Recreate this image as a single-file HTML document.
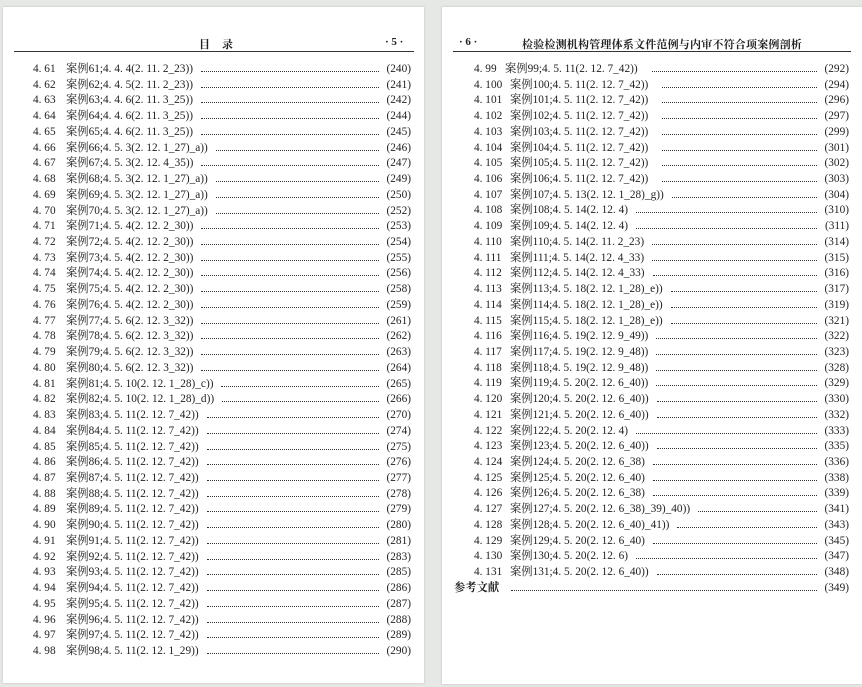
<!DOCTYPE html>
<html><head><meta charset="utf-8"><style>
body{margin:0;width:862px;height:687px;background:#e6e8e6;position:relative;overflow:hidden;font-family:"Liberation Serif","Noto Serif CJK SC",serif;color:#222;}
.pg{position:absolute;background:#fff;box-shadow:0 0 2px #bbb;}
.hl{position:absolute;border-top:1px solid #333;height:0;}
.h{position:absolute;font-size:11px;font-weight:bold;white-space:nowrap;}
.r{position:absolute;height:15px;line-height:15px;font-size:11.3px;display:flex;white-space:nowrap;}
.n{width:33px;flex:none;}
.t{flex:none;}
.d{flex:1;margin:0 8px 0 8px;border-bottom:1.5px dotted #333;height:9px;}
.p{flex:none;}
</style></head><body>
<div class="pg" style="left:3px;top:7px;width:421px;height:676px">
<div class="h" style="left:196px;top:29px;letter-spacing:12px">目录</div>
<div class="h" style="left:382px;top:29px">· 5 ·</div>
<div class="hl" style="left:11px;top:44px;width:400px"></div>
<div style="position:absolute;left:30px;top:55px;width:378px">
<div class="r" style="top:0;width:100%"><span class="n">4. 61</span><span class="t">案例61;4. 4. 4(2. 11. 2_23))</span><span class="d"></span><span class="p">(240)</span></div>
<div class="r" style="top:15.73px;width:100%"><span class="n">4. 62</span><span class="t">案例62;4. 4. 5(2. 11. 2_23))</span><span class="d"></span><span class="p">(241)</span></div>
<div class="r" style="top:31.46px;width:100%"><span class="n">4. 63</span><span class="t">案例63;4. 4. 6(2. 11. 3_25))</span><span class="d"></span><span class="p">(242)</span></div>
<div class="r" style="top:47.19px;width:100%"><span class="n">4. 64</span><span class="t">案例64;4. 4. 6(2. 11. 3_25))</span><span class="d"></span><span class="p">(244)</span></div>
<div class="r" style="top:62.92px;width:100%"><span class="n">4. 65</span><span class="t">案例65;4. 4. 6(2. 11. 3_25))</span><span class="d"></span><span class="p">(245)</span></div>
<div class="r" style="top:78.65px;width:100%"><span class="n">4. 66</span><span class="t">案例66;4. 5. 3(2. 12. 1_27)_a))</span><span class="d"></span><span class="p">(246)</span></div>
<div class="r" style="top:94.38px;width:100%"><span class="n">4. 67</span><span class="t">案例67;4. 5. 3(2. 12. 4_35))</span><span class="d"></span><span class="p">(247)</span></div>
<div class="r" style="top:110.11px;width:100%"><span class="n">4. 68</span><span class="t">案例68;4. 5. 3(2. 12. 1_27)_a))</span><span class="d"></span><span class="p">(249)</span></div>
<div class="r" style="top:125.84px;width:100%"><span class="n">4. 69</span><span class="t">案例69;4. 5. 3(2. 12. 1_27)_a))</span><span class="d"></span><span class="p">(250)</span></div>
<div class="r" style="top:141.57px;width:100%"><span class="n">4. 70</span><span class="t">案例70;4. 5. 3(2. 12. 1_27)_a))</span><span class="d"></span><span class="p">(252)</span></div>
<div class="r" style="top:157.3px;width:100%"><span class="n">4. 71</span><span class="t">案例71;4. 5. 4(2. 12. 2_30))</span><span class="d"></span><span class="p">(253)</span></div>
<div class="r" style="top:173.03px;width:100%"><span class="n">4. 72</span><span class="t">案例72;4. 5. 4(2. 12. 2_30))</span><span class="d"></span><span class="p">(254)</span></div>
<div class="r" style="top:188.76px;width:100%"><span class="n">4. 73</span><span class="t">案例73;4. 5. 4(2. 12. 2_30))</span><span class="d"></span><span class="p">(255)</span></div>
<div class="r" style="top:204.49px;width:100%"><span class="n">4. 74</span><span class="t">案例74;4. 5. 4(2. 12. 2_30))</span><span class="d"></span><span class="p">(256)</span></div>
<div class="r" style="top:220.22px;width:100%"><span class="n">4. 75</span><span class="t">案例75;4. 5. 4(2. 12. 2_30))</span><span class="d"></span><span class="p">(258)</span></div>
<div class="r" style="top:235.95px;width:100%"><span class="n">4. 76</span><span class="t">案例76;4. 5. 4(2. 12. 2_30))</span><span class="d"></span><span class="p">(259)</span></div>
<div class="r" style="top:251.68px;width:100%"><span class="n">4. 77</span><span class="t">案例77;4. 5. 6(2. 12. 3_32))</span><span class="d"></span><span class="p">(261)</span></div>
<div class="r" style="top:267.41px;width:100%"><span class="n">4. 78</span><span class="t">案例78;4. 5. 6(2. 12. 3_32))</span><span class="d"></span><span class="p">(262)</span></div>
<div class="r" style="top:283.14px;width:100%"><span class="n">4. 79</span><span class="t">案例79;4. 5. 6(2. 12. 3_32))</span><span class="d"></span><span class="p">(263)</span></div>
<div class="r" style="top:298.87px;width:100%"><span class="n">4. 80</span><span class="t">案例80;4. 5. 6(2. 12. 3_32))</span><span class="d"></span><span class="p">(264)</span></div>
<div class="r" style="top:314.6px;width:100%"><span class="n">4. 81</span><span class="t">案例81;4. 5. 10(2. 12. 1_28)_c))</span><span class="d"></span><span class="p">(265)</span></div>
<div class="r" style="top:330.33px;width:100%"><span class="n">4. 82</span><span class="t">案例82;4. 5. 10(2. 12. 1_28)_d))</span><span class="d"></span><span class="p">(266)</span></div>
<div class="r" style="top:346.06px;width:100%"><span class="n">4. 83</span><span class="t">案例83;4. 5. 11(2. 12. 7_42))</span><span class="d"></span><span class="p">(270)</span></div>
<div class="r" style="top:361.79px;width:100%"><span class="n">4. 84</span><span class="t">案例84;4. 5. 11(2. 12. 7_42))</span><span class="d"></span><span class="p">(274)</span></div>
<div class="r" style="top:377.52px;width:100%"><span class="n">4. 85</span><span class="t">案例85;4. 5. 11(2. 12. 7_42))</span><span class="d"></span><span class="p">(275)</span></div>
<div class="r" style="top:393.25px;width:100%"><span class="n">4. 86</span><span class="t">案例86;4. 5. 11(2. 12. 7_42))</span><span class="d"></span><span class="p">(276)</span></div>
<div class="r" style="top:408.98px;width:100%"><span class="n">4. 87</span><span class="t">案例87;4. 5. 11(2. 12. 7_42))</span><span class="d"></span><span class="p">(277)</span></div>
<div class="r" style="top:424.71px;width:100%"><span class="n">4. 88</span><span class="t">案例88;4. 5. 11(2. 12. 7_42))</span><span class="d"></span><span class="p">(278)</span></div>
<div class="r" style="top:440.44px;width:100%"><span class="n">4. 89</span><span class="t">案例89;4. 5. 11(2. 12. 7_42))</span><span class="d"></span><span class="p">(279)</span></div>
<div class="r" style="top:456.17px;width:100%"><span class="n">4. 90</span><span class="t">案例90;4. 5. 11(2. 12. 7_42))</span><span class="d"></span><span class="p">(280)</span></div>
<div class="r" style="top:471.9px;width:100%"><span class="n">4. 91</span><span class="t">案例91;4. 5. 11(2. 12. 7_42))</span><span class="d"></span><span class="p">(281)</span></div>
<div class="r" style="top:487.63px;width:100%"><span class="n">4. 92</span><span class="t">案例92;4. 5. 11(2. 12. 7_42))</span><span class="d"></span><span class="p">(283)</span></div>
<div class="r" style="top:503.36px;width:100%"><span class="n">4. 93</span><span class="t">案例93;4. 5. 11(2. 12. 7_42))</span><span class="d"></span><span class="p">(285)</span></div>
<div class="r" style="top:519.09px;width:100%"><span class="n">4. 94</span><span class="t">案例94;4. 5. 11(2. 12. 7_42))</span><span class="d"></span><span class="p">(286)</span></div>
<div class="r" style="top:534.82px;width:100%"><span class="n">4. 95</span><span class="t">案例95;4. 5. 11(2. 12. 7_42))</span><span class="d"></span><span class="p">(287)</span></div>
<div class="r" style="top:550.55px;width:100%"><span class="n">4. 96</span><span class="t">案例96;4. 5. 11(2. 12. 7_42))</span><span class="d"></span><span class="p">(288)</span></div>
<div class="r" style="top:566.28px;width:100%"><span class="n">4. 97</span><span class="t">案例97;4. 5. 11(2. 12. 7_42))</span><span class="d"></span><span class="p">(289)</span></div>
<div class="r" style="top:582.01px;width:100%"><span class="n">4. 98</span><span class="t">案例98;4. 5. 11(2. 12. 1_29))</span><span class="d"></span><span class="p">(290)</span></div>
</div>
</div>
<div class="pg" style="left:442px;top:7px;width:420px;height:677px">
<div class="h" style="left:17px;top:29px">· 6 ·</div>
<div class="h" style="left:80px;top:29px;letter-spacing:0.2px">检验检测机构管理体系文件范例与内审不符合项案例剖析</div>
<div class="hl" style="left:11px;top:44px;width:398px"></div>
<div style="position:absolute;left:32px;top:55px;width:375px">
<div class="r" style="top:0;width:100%"><span class="n" style="width:31px">4. 99</span><span class="t">案例99;4. 5. 11(2. 12. 7_42))</span><span class="d" style="margin-left:14px"></span><span class="p">(292)</span></div>
<div class="r" style="top:15.72px;width:100%"><span class="n" style="width:36px">4. 100</span><span class="t">案例100;4. 5. 11(2. 12. 7_42))</span><span class="d" style="margin-left:14px"></span><span class="p">(294)</span></div>
<div class="r" style="top:31.44px;width:100%"><span class="n" style="width:36px">4. 101</span><span class="t">案例101;4. 5. 11(2. 12. 7_42))</span><span class="d" style="margin-left:14px"></span><span class="p">(296)</span></div>
<div class="r" style="top:47.16px;width:100%"><span class="n" style="width:36px">4. 102</span><span class="t">案例102;4. 5. 11(2. 12. 7_42))</span><span class="d" style="margin-left:14px"></span><span class="p">(297)</span></div>
<div class="r" style="top:62.88px;width:100%"><span class="n" style="width:36px">4. 103</span><span class="t">案例103;4. 5. 11(2. 12. 7_42))</span><span class="d" style="margin-left:14px"></span><span class="p">(299)</span></div>
<div class="r" style="top:78.6px;width:100%"><span class="n" style="width:36px">4. 104</span><span class="t">案例104;4. 5. 11(2. 12. 7_42))</span><span class="d" style="margin-left:14px"></span><span class="p">(301)</span></div>
<div class="r" style="top:94.32px;width:100%"><span class="n" style="width:36px">4. 105</span><span class="t">案例105;4. 5. 11(2. 12. 7_42))</span><span class="d" style="margin-left:14px"></span><span class="p">(302)</span></div>
<div class="r" style="top:110.04px;width:100%"><span class="n" style="width:36px">4. 106</span><span class="t">案例106;4. 5. 11(2. 12. 7_42))</span><span class="d" style="margin-left:14px"></span><span class="p">(303)</span></div>
<div class="r" style="top:125.76px;width:100%"><span class="n" style="width:36px">4. 107</span><span class="t">案例107;4. 5. 13(2. 12. 1_28)_g))</span><span class="d"></span><span class="p">(304)</span></div>
<div class="r" style="top:141.48px;width:100%"><span class="n" style="width:36px">4. 108</span><span class="t">案例108;4. 5. 14(2. 12. 4)</span><span class="d"></span><span class="p">(310)</span></div>
<div class="r" style="top:157.2px;width:100%"><span class="n" style="width:36px">4. 109</span><span class="t">案例109;4. 5. 14(2. 12. 4)</span><span class="d"></span><span class="p">(311)</span></div>
<div class="r" style="top:172.92px;width:100%"><span class="n" style="width:36px">4. 110</span><span class="t">案例110;4. 5. 14(2. 11. 2_23)</span><span class="d"></span><span class="p">(314)</span></div>
<div class="r" style="top:188.64px;width:100%"><span class="n" style="width:36px">4. 111</span><span class="t">案例111;4. 5. 14(2. 12. 4_33)</span><span class="d"></span><span class="p">(315)</span></div>
<div class="r" style="top:204.36px;width:100%"><span class="n" style="width:36px">4. 112</span><span class="t">案例112;4. 5. 14(2. 12. 4_33)</span><span class="d"></span><span class="p">(316)</span></div>
<div class="r" style="top:220.08px;width:100%"><span class="n" style="width:36px">4. 113</span><span class="t">案例113;4. 5. 18(2. 12. 1_28)_e))</span><span class="d"></span><span class="p">(317)</span></div>
<div class="r" style="top:235.8px;width:100%"><span class="n" style="width:36px">4. 114</span><span class="t">案例114;4. 5. 18(2. 12. 1_28)_e))</span><span class="d"></span><span class="p">(319)</span></div>
<div class="r" style="top:251.52px;width:100%"><span class="n" style="width:36px">4. 115</span><span class="t">案例115;4. 5. 18(2. 12. 1_28)_e))</span><span class="d"></span><span class="p">(321)</span></div>
<div class="r" style="top:267.24px;width:100%"><span class="n" style="width:36px">4. 116</span><span class="t">案例116;4. 5. 19(2. 12. 9_49))</span><span class="d"></span><span class="p">(322)</span></div>
<div class="r" style="top:282.96px;width:100%"><span class="n" style="width:36px">4. 117</span><span class="t">案例117;4. 5. 19(2. 12. 9_48))</span><span class="d"></span><span class="p">(323)</span></div>
<div class="r" style="top:298.68px;width:100%"><span class="n" style="width:36px">4. 118</span><span class="t">案例118;4. 5. 19(2. 12. 9_48))</span><span class="d"></span><span class="p">(328)</span></div>
<div class="r" style="top:314.4px;width:100%"><span class="n" style="width:36px">4. 119</span><span class="t">案例119;4. 5. 20(2. 12. 6_40))</span><span class="d"></span><span class="p">(329)</span></div>
<div class="r" style="top:330.12px;width:100%"><span class="n" style="width:36px">4. 120</span><span class="t">案例120;4. 5. 20(2. 12. 6_40))</span><span class="d"></span><span class="p">(330)</span></div>
<div class="r" style="top:345.84px;width:100%"><span class="n" style="width:36px">4. 121</span><span class="t">案例121;4. 5. 20(2. 12. 6_40))</span><span class="d"></span><span class="p">(332)</span></div>
<div class="r" style="top:361.56px;width:100%"><span class="n" style="width:36px">4. 122</span><span class="t">案例122;4. 5. 20(2. 12. 4)</span><span class="d"></span><span class="p">(333)</span></div>
<div class="r" style="top:377.28px;width:100%"><span class="n" style="width:36px">4. 123</span><span class="t">案例123;4. 5. 20(2. 12. 6_40))</span><span class="d"></span><span class="p">(335)</span></div>
<div class="r" style="top:393px;width:100%"><span class="n" style="width:36px">4. 124</span><span class="t">案例124;4. 5. 20(2. 12. 6_38)</span><span class="d"></span><span class="p">(336)</span></div>
<div class="r" style="top:408.72px;width:100%"><span class="n" style="width:36px">4. 125</span><span class="t">案例125;4. 5. 20(2. 12. 6_40)</span><span class="d"></span><span class="p">(338)</span></div>
<div class="r" style="top:424.44px;width:100%"><span class="n" style="width:36px">4. 126</span><span class="t">案例126;4. 5. 20(2. 12. 6_38)</span><span class="d"></span><span class="p">(339)</span></div>
<div class="r" style="top:440.16px;width:100%"><span class="n" style="width:36px">4. 127</span><span class="t">案例127;4. 5. 20(2. 12. 6_38)_39)_40))</span><span class="d"></span><span class="p">(341)</span></div>
<div class="r" style="top:455.88px;width:100%"><span class="n" style="width:36px">4. 128</span><span class="t">案例128;4. 5. 20(2. 12. 6_40)_41))</span><span class="d"></span><span class="p">(343)</span></div>
<div class="r" style="top:471.6px;width:100%"><span class="n" style="width:36px">4. 129</span><span class="t">案例129;4. 5. 20(2. 12. 6_40)</span><span class="d"></span><span class="p">(345)</span></div>
<div class="r" style="top:487.32px;width:100%"><span class="n" style="width:36px">4. 130</span><span class="t">案例130;4. 5. 20(2. 12. 6)</span><span class="d"></span><span class="p">(347)</span></div>
<div class="r" style="top:503.04px;width:100%"><span class="n" style="width:36px">4. 131</span><span class="t">案例131;4. 5. 20(2. 12. 6_40))</span><span class="d"></span><span class="p">(348)</span></div>
<div class="r" style="top:518.76px;left:-20px;width:395px"><span class="t" style="font-weight:bold">参考文献</span><span class="d" style="margin-left:12px"></span><span class="p">(349)</span></div>
</div>
</div>
</body></html>
